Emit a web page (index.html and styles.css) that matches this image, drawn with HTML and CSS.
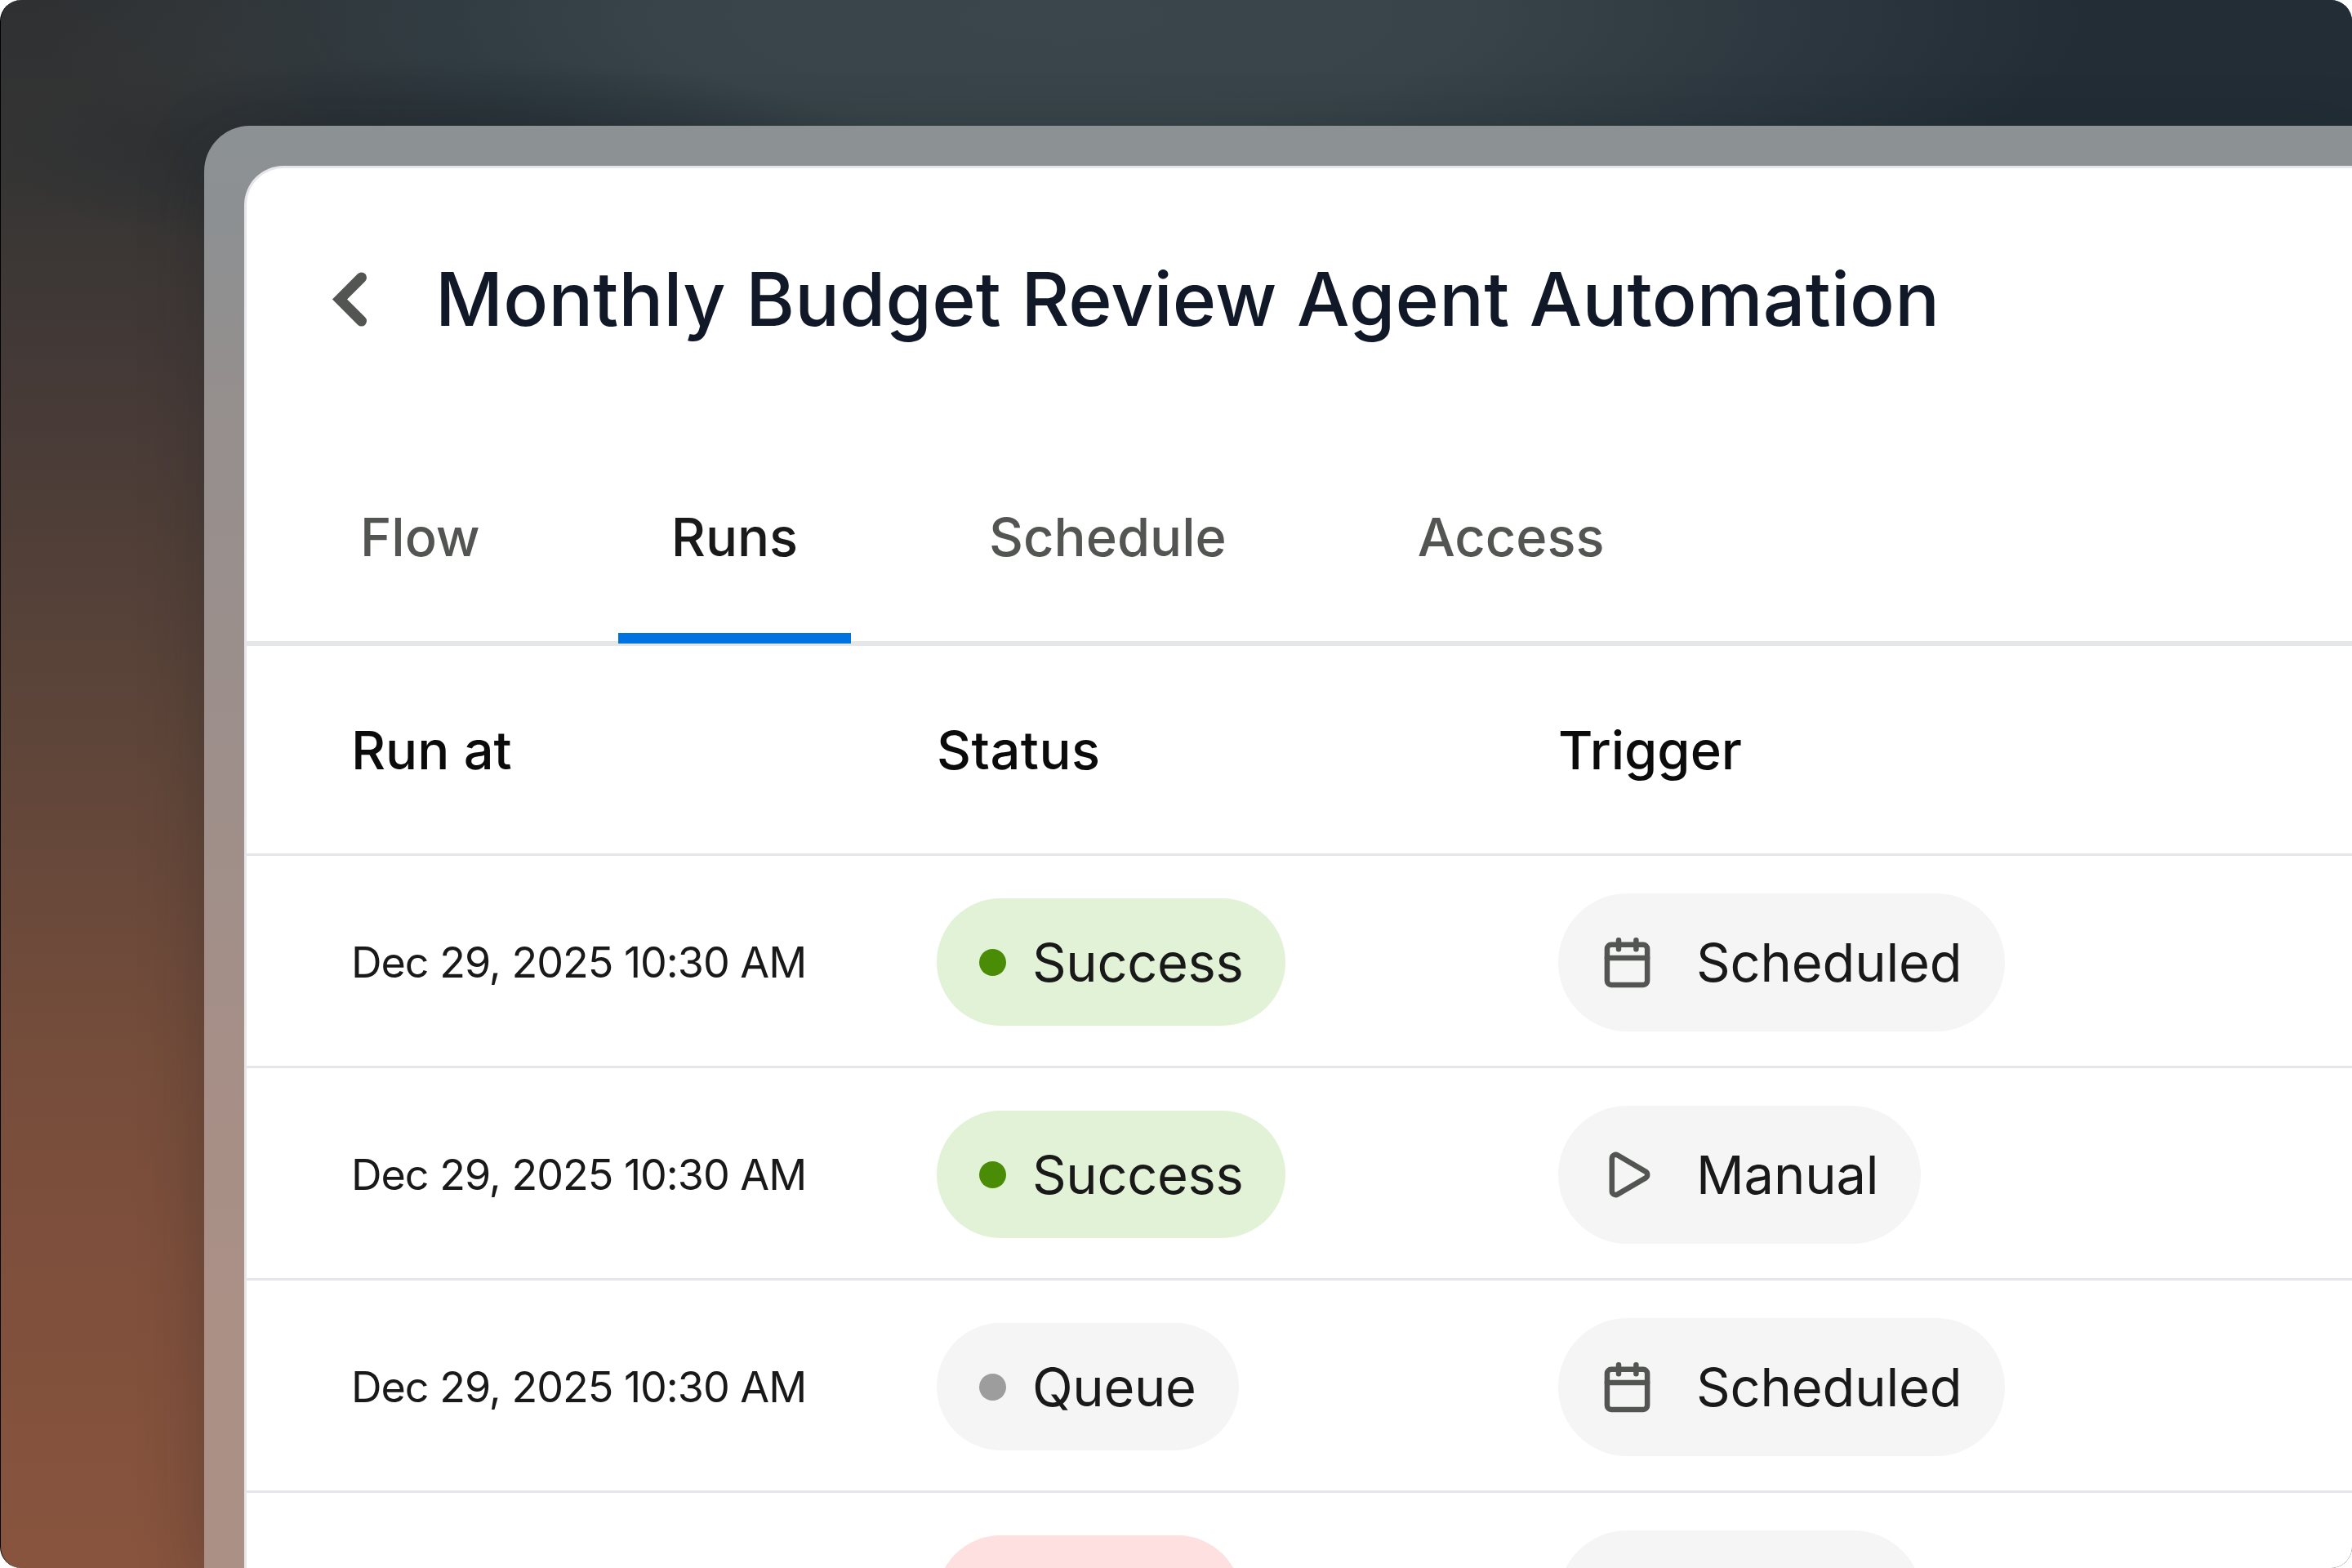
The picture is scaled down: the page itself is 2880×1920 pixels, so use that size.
FILE: index.html
```html
<!DOCTYPE html>
<html lang="en">
<head>
<meta charset="utf-8">
<title>Monthly Budget Review Agent Automation</title>
<link rel="stylesheet" href="styles.css">
</head>
<body>
<svg class="symbols" width="0" height="0" aria-hidden="true">
  <symbol id="calendar" viewBox="0 0 65 65">
    <rect x="7.9" y="10.8" width="49.2" height="49.2" rx="5"/>
    <path d="M7.9 26.9h49.2M22 5.2v11.1M43.4 5.2v11.1"/>
  </symbol>
  <symbol id="play" viewBox="0 0 65 65">
    <path d="M13.8 12.5a4.6 4.6 0 0 1 7-3.9L55 28.6a4.6 4.6 0 0 1 0 7.8L20.8 56.4a4.6 4.6 0 0 1-7-3.9Z"/>
  </symbol>
</svg>
<div class="stage">
  <div class="frame">
    <main class="card">
      <header class="header">
        <svg class="back" viewBox="0 0 65 78"><path d="M47.6 12.9 21 39.5 47.6 66.1"/></svg>
        <h1 class="title">Monthly Budget Review Agent Automation</h1>
      </header>
      <nav class="tabs">
        <a class="tab">Flow</a>
        <a class="tab tab-active">Runs</a>
        <a class="tab">Schedule</a>
        <a class="tab">Access</a>
      </nav>
      <section class="table">
        <div class="row row-head"><span>Run at</span><span class="head-status">Status</span><span>Trigger</span></div>
        <div class="row">
          <span class="date">Dec 29, 2025 10:30 AM</span>
          <span class="status status-success"><i class="dot"></i>Success</span>
          <span class="trigger"><svg class="icon"><use href="#calendar"/></svg>Scheduled</span>
        </div>
        <div class="row">
          <span class="date">Dec 29, 2025 10:30 AM</span>
          <span class="status status-success"><i class="dot"></i>Success</span>
          <span class="trigger"><svg class="icon"><use href="#play"/></svg>Manual</span>
        </div>
        <div class="row">
          <span class="date">Dec 29, 2025 10:30 AM</span>
          <span class="status"><i class="dot"></i>Queue</span>
          <span class="trigger"><svg class="icon"><use href="#calendar"/></svg>Scheduled</span>
        </div>
        <div class="row">
          <span></span>
          <span class="status status-failed"></span>
          <span class="trigger trigger-empty"></span>
        </div>
      </section>
    </main>
  </div>
</div>
</body>
</html>
```
FILE: styles.css
```css
* { box-sizing: border-box; }

body {
  margin: 0;
  width: 2880px;
  height: 1920px;
  overflow: hidden;
  background: #fff;
  font-family: Inter, "Liberation Sans", sans-serif;
  font-size: 65px;
  color: #191919;
}

.symbols { display: block; }

.stage {
  height: 1920px;
  padding: 154px 0 0 249px;
  overflow: hidden;
  border-left: 1px solid #000;
  border-radius: 26px;
  background:
    radial-gradient(ellipse 560px 120px at 520px 190px, rgba(36, 43, 49, .85) 0%, rgba(38, 43, 48, 0) 100%),
    radial-gradient(ellipse 1250px 330px at 1300px 20px, #3a464b 0%, rgba(57, 69, 74, .95) 40%, rgba(56, 68, 74, 0) 100%),
    linear-gradient(90deg, transparent 250px, #222d36 620px),
    linear-gradient(180deg, #2e3032 0, #363534 220px, #463a37 480px, #5e4539 900px, #764d3b 1300px, #80503c 1600px, #88543e 1920px);
}

.frame {
  height: 1766px;
  padding: 49px 0 0 49px;
  border-radius: 56px 0 0 0;
  background: linear-gradient(180deg, #8c9193 0, #8c9092 100px, #958f8e 330px, #9c8f8b 700px, #a68f87 1150px, #ab9085 1500px);
  box-shadow: 0 20px 80px rgba(20, 28, 34, .28);
}

.card {
  height: 1717px;
  overflow: hidden;
  border: 3px solid #e5e6ea;
  border-width: 3px 0 0 3px;
  border-radius: 48px 0 0 0;
  background: #fff;
}

.header {
  display: flex;
  align-items: center;
  height: 319px;
  padding-left: 93px;
}

.back {
  width: 65px;
  height: 78px;
  fill: none;
  stroke: #535553;
  stroke-width: 12.8;
  stroke-linecap: round;
}

.title {
  margin: 0 0 0 73px;
  font-size: 91px;
  font-weight: 500;
  line-height: 110px;
  letter-spacing: .19px;
  color: #111827;
  white-space: nowrap;
}

.tabs {
  display: flex;
  gap: 104px;
  height: 266px;
  padding-left: 74px;
  border-bottom: 6px solid #e5e6e8;
}

.tab {
  display: flex;
  align-items: center;
  height: 263px;
  padding: 14px 65px 0;
  border-bottom: 13px solid transparent;
  font-weight: 500;
  color: #535553;
}

.tab-active {
  border-color: #0073e0;
  color: #191919;
}

.row {
  display: grid;
  grid-template-columns: 717px 761px 1fr;
  align-items: center;
  justify-items: start;
  height: 260px;
  padding: 3px 0 0 128px;
  border-bottom: 3px solid #e5e6ea;
}

.row-head {
  height: 257px;
  padding-top: 0;
  font-weight: 500;
  color: #0b0b0b;
}

.head-status { letter-spacing: .5px; }

.date {
  font-size: 52px;
  letter-spacing: -1px;
}

.status,
.trigger {
  display: flex;
  align-items: center;
  border-radius: 85px;
  background: #f5f5f5;
}

.status {
  gap: 32px;
  height: 156px;
  padding: 0 52px;
  letter-spacing: -.35px;
}

.status-success { background: #e2f2d6; }
.status-success .dot { background: #4a8c05; }

.status-failed {
  width: 373px;
  background: #ffe0e0;
}

.dot {
  width: 33px;
  height: 33px;
  border-radius: 50%;
  background: #9d9d9d;
}

.trigger {
  gap: 52px;
  height: 169px;
  padding: 0 52px;
  letter-spacing: -.15px;
}

.trigger-empty { width: 446px; }

.icon {
  width: 65px;
  height: 65px;
  fill: none;
  stroke: #535553;
  stroke-width: 6.5;
  stroke-linecap: round;
}
```
